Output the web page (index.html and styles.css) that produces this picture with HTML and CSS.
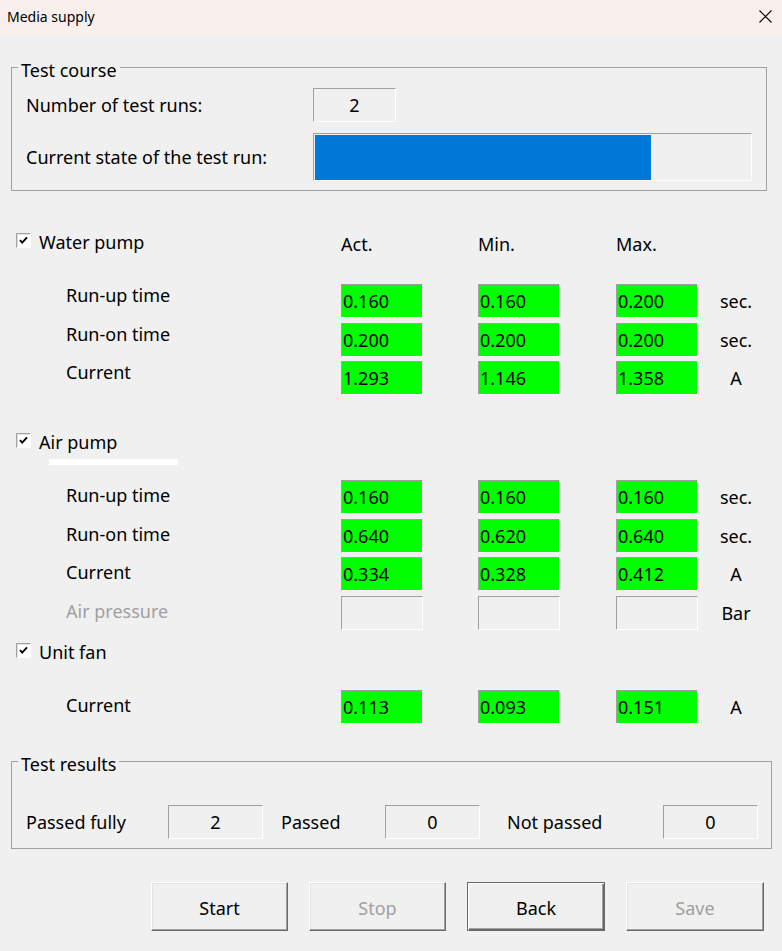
FILE: index.html
```html
<!DOCTYPE html>
<html lang="en">
<head>
<meta charset="utf-8">
<title>Media supply</title>
<link rel="stylesheet" href="styles.css">
</head>
<body>
<header class="titlebar">
  <span class="title">Media supply</span>
  <svg class="close" width="13" height="13" viewBox="0 0 13 13"><path d="M0.5 0.5L12.5 12.5M12.5 0.5L0.5 12.5" stroke="#000" stroke-width="1.1" fill="none"/></svg>
</header>

<fieldset class="group course">
  <legend>Test course</legend>
  <div class="course-row">
    <span>Number of test runs:</span>
    <div class="field center runs">2</div>
  </div>
  <div class="course-row">
    <span>Current state of the test run:</span>
    <div class="progress"><div class="progress-fill" style="width:336px"></div></div>
  </div>
</fieldset>

<section class="unit water">
  <div class="grid head">
    <div class="check-label"><span class="checkbox"><svg width="13" height="13" viewBox="0 0 13 13"><path d="M3 6.2L5.2 8.6L10 3.4" stroke="#000" stroke-width="1.9" fill="none"/></svg></span><span>Water pump</span></div>
    <span class="col-h">Act.</span><span class="col-h">Min.</span><span class="col-h">Max.</span>
  </div>
  <div class="rows">
    <div class="grid row"><span class="name">Run-up time</span><div class="field ok">0.160</div><div class="field ok">0.160</div><div class="field ok">0.200</div><span class="unit-l">sec.</span></div>
    <div class="grid row"><span class="name">Run-on time</span><div class="field ok">0.200</div><div class="field ok">0.200</div><div class="field ok">0.200</div><span class="unit-l">sec.</span></div>
    <div class="grid row"><span class="name">Current</span><div class="field ok">1.293</div><div class="field ok">1.146</div><div class="field ok">1.358</div><span class="unit-l">A</span></div>
  </div>
</section>

<section class="unit air">
  <div class="grid head">
    <div class="check-label"><span class="checkbox"><svg width="13" height="13" viewBox="0 0 13 13"><path d="M3 6.2L5.2 8.6L10 3.4" stroke="#000" stroke-width="1.9" fill="none"/></svg></span><span>Air pump</span></div>
  </div>
  <div class="bar"></div>
  <div class="rows">
    <div class="grid row"><span class="name">Run-up time</span><div class="field ok">0.160</div><div class="field ok">0.160</div><div class="field ok">0.160</div><span class="unit-l">sec.</span></div>
    <div class="grid row"><span class="name">Run-on time</span><div class="field ok">0.640</div><div class="field ok">0.620</div><div class="field ok">0.640</div><span class="unit-l">sec.</span></div>
    <div class="grid row"><span class="name">Current</span><div class="field ok">0.334</div><div class="field ok">0.328</div><div class="field ok">0.412</div><span class="unit-l">A</span></div>
    <div class="grid row"><span class="name disabled">Air pressure</span><div class="field"></div><div class="field"></div><div class="field"></div><span class="unit-l">Bar</span></div>
  </div>
</section>

<section class="unit fan">
  <div class="grid head">
    <div class="check-label"><span class="checkbox"><svg width="13" height="13" viewBox="0 0 13 13"><path d="M3 6.2L5.2 8.6L10 3.4" stroke="#000" stroke-width="1.9" fill="none"/></svg></span><span>Unit fan</span></div>
  </div>
  <div class="rows">
    <div class="grid row"><span class="name">Current</span><div class="field ok">0.113</div><div class="field ok">0.093</div><div class="field ok">0.151</div><span class="unit-l">A</span></div>
  </div>
</section>

<fieldset class="group results">
  <legend>Test results</legend>
  <div class="results-row">
    <span>Passed fully</span>
    <div class="field center">2</div>
    <span class="pad-a">Passed</span>
    <div class="field center">0</div>
    <span class="pad-b">Not passed</span>
    <div class="field center">0</div>
  </div>
</fieldset>

<div class="buttons">
  <button class="btn">Start</button>
  <button class="btn disabled">Stop</button>
  <button class="btn default wide">Back</button>
  <button class="btn disabled wide">Save</button>
</div>
</body>
</html>
```
FILE: styles.css
```css
* { box-sizing: border-box; }
html, body { margin: 0; padding: 0; }
body {
  width: 782px;
  height: 951px;
  overflow: hidden;
  background: #f0f0f0;
  color: #000;
  font-family: "Noto Sans", "Open Sans", sans-serif;
  font-size: 18px;
}

.titlebar {
  height: 34px;
  background: #f9f0ed;
  display: flex;
  align-items: center;
  justify-content: space-between;
  padding: 0 10px 0 7px;
}
.title { font-size: 14px; line-height: 34px; }
.close { display: block; margin-top: -1px; }

.group {
  margin: 0 0 0 11px;
  padding: 0;
  border: 1px solid #a0a0a0;
  min-inline-size: 0;
}
.group legend {
  margin-left: 6px;
  padding: 6px 3px 0;
  line-height: 20px;
  font-size: 18px;
}
.course { margin-top: 20px; width: 756px; padding: 8px 0 9px; }
.results { margin-top: 24px; width: 761px; padding: 31px 0 9px; }

.course-row {
  display: grid;
  grid-template-columns: 287px auto;
  align-items: center;
  padding-left: 14px;
}
.course-row + .course-row { margin-top: 11px; }

.field {
  height: 34px;
  border: 1px solid;
  border-color: #a0a0a0 #fff #fff #a0a0a0;
  line-height: 32px;
  padding-left: 1px;
  white-space: nowrap;
}
.field.ok { background: #00ff00; }
.field.center { text-align: center; padding: 0; }
.runs { width: 83px; }

.progress {
  width: 439px;
  height: 48px;
  border: 1px solid;
  border-color: #a0a0a0 #fff #fff #a0a0a0;
  padding: 1px 0 0 1px;
}
.progress-fill { height: 45px; background: #0078d7; }

.unit { margin-left: 16px; }
.water { margin-top: 42px; }
.air { margin-top: 38px; }
.fan { margin-top: 13.5px; }

.grid {
  display: grid;
  grid-template-columns: 325px 137px 138px 82px 76px;
}
.head { height: 22px; }
.check-label {
  display: flex;
  align-items: flex-start;
  gap: 8px;
  line-height: 19px;
  white-space: nowrap;
}
.checkbox {
  width: 15px;
  height: 15px;
  flex: none;
  border: 1px solid;
  border-color: #a0a0a0 #fff #fff #a0a0a0;
  background: #fff;
  box-shadow: inset 1px 1px 0 #e3e3e3;
}
.checkbox svg { display: block; }
.col-h { line-height: 22px; }

.rows {
  display: flex;
  flex-direction: column;
  gap: 4.5px;
  margin-top: 29px;
}
.air .rows { margin-top: 15px; }
.fan .rows { margin-top: 25px; }
.row { height: 34px; }
.row .field { width: 82px; }
.name { padding-left: 50px; line-height: 22px; white-space: nowrap; }
.air .name, .fan .name { line-height: 30px; }
.name.disabled { color: #a0a0a0; }
.unit-l { text-align: center; line-height: 34px; }

.bar { width: 129px; height: 6px; margin: 4px 0 0 33px; background: #fff; }

.results-row {
  display: grid;
  grid-template-columns: 142px 95px 122px 95px 183px 95px;
  align-items: center;
  padding-left: 14px;
  white-space: nowrap;
}
.pad-a { padding-left: 18px; }
.pad-b { padding-left: 27px; }

.buttons {
  display: flex;
  gap: 21px;
  margin: 33px 0 0 151px;
}
.btn {
  width: 137px;
  height: 49px;
  margin: 0;
  padding: 3px 0 0;
  font: inherit;
  color: #000;
  background: #f0f0f0;
  border: 1px solid;
  border-color: #fff #696969 #696969 #fff;
  box-shadow: inset -1px -1px 0 #a0a0a0, inset 1px 1px 0 #e3e3e3;
}
.btn.wide { width: 138px; }
.btn.default {
  border-color: #696969;
  box-shadow: inset 1px 1px 0 #fff, inset -1px -1px 0 #696969, inset -2px -2px 0 #a0a0a0;
}
.btn.disabled { color: #a0a0a0; }
```
